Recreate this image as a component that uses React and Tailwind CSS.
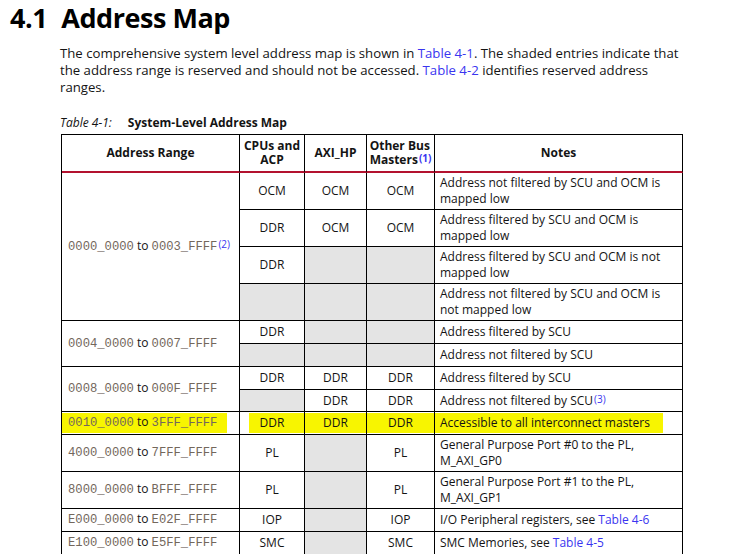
import React from "react";

const sans = "font-['Open_Sans','Noto_Sans',sans-serif]";
const mono = "font-['Liberation_Mono',monospace] text-[12.2px] text-[#73675c]";
const link = "text-[#3a35f0]";

const Sup = ({ n }) => (
    <sup className={`${link} text-[10px] relative -top-[2px] ml-[1px]`}>({n})</sup>
);

const Addr = ({ from, to, sup }) => (
    <span>
        <span className={mono}>{from}</span> to <span className={mono}>{to}</span>
        {sup && <Sup n={sup} />}
    </span>
);

const Cell = ({ children, gray, className = "" }) => (
    <div className={`border-r border-b border-black flex items-center justify-center ${gray ? "bg-[#e4e4e4]" : ""} ${className}`}>
        {children}
    </div>
);

const AddrCell = ({ children, className = "" }) => (
    <div className={`border-r border-b border-black flex items-center pl-[6px] ${className}`}>{children}</div>
);

const Note = ({ children }) => (
    <div className="border-r border-b border-black flex items-center pl-[5px] pr-[4px] leading-[16px]">
        <div>{children}</div>
    </div>
);

const Head = ({ children }) => (
    <div className="border-r border-b-2 border-b-[#b3122f] border-r-black flex items-center justify-center text-center font-bold leading-[14px]">
        {children}
    </div>
);

export default function App() {
    return (
        <div className={`${sans} bg-white text-[#141414] w-[730px] h-[554px] overflow-hidden`}>
            <h1 className="pl-[10px] pt-[1px] text-[27px] font-bold leading-[33px] text-black tracking-[-0.45px]">
                4.1<span className="ml-[14px]">Address Map</span>
            </h1>

            <div className="pl-[60px] mt-[11px] text-[13.2px] leading-[17px]">
                <div>The comprehensive system level address map is shown in <span className={link}>Table 4-1</span>. The shaded entries indicate that</div>
                <div>the address range is reserved and should not be accessed. <span className={link}>Table 4-2</span> identifies reserved address</div>
                <div>ranges.</div>
            </div>

            <div className="pl-[60px] mt-[19px] text-[12px] leading-[16px]">
                <span className="italic">Table 4-1:</span>
                <span className="font-bold ml-[16px]">System-Level Address Map</span>
            </div>

            <div className="ml-[61px] mt-[3px] w-[622px] border-l border-t border-black grid grid-cols-[178px_65px_62px_68px_248px] grid-rows-[38px_37px_37px_37px_37px_23px_23px_23px_22px_23px_37px_37px_23px_23px] text-[12px]">
                <Head>Address Range</Head>
                <Head>CPUs and<br />ACP</Head>
                <Head>AXI_HP</Head>
                <Head><span className="text-left">Other Bus<br />Masters<Sup n="1" /></span></Head>
                <Head>Notes</Head>

                <AddrCell className="row-span-4"><Addr from="0000_0000" to="0003_FFFF" sup="2" /></AddrCell>
                <Cell>OCM</Cell>
                <Cell>OCM</Cell>
                <Cell>OCM</Cell>
                <Note>Address not filtered by SCU and OCM is<br />mapped low</Note>

                <Cell>DDR</Cell>
                <Cell>OCM</Cell>
                <Cell>OCM</Cell>
                <Note>Address filtered by SCU and OCM is<br />mapped low</Note>

                <Cell>DDR</Cell>
                <Cell gray />
                <Cell gray />
                <Note>Address filtered by SCU and OCM is not<br />mapped low</Note>

                <Cell gray />
                <Cell gray />
                <Cell gray />
                <Note>Address not filtered by SCU and OCM is<br />not mapped low</Note>

                <AddrCell className="row-span-2"><Addr from="0004_0000" to="0007_FFFF" /></AddrCell>
                <Cell>DDR</Cell>
                <Cell gray />
                <Cell gray />
                <Note>Address filtered by SCU</Note>

                <Cell gray />
                <Cell gray />
                <Cell gray />
                <Note>Address not filtered by SCU</Note>

                <AddrCell className="row-span-2"><Addr from="0008_0000" to="000F_FFFF" /></AddrCell>
                <Cell>DDR</Cell>
                <Cell>DDR</Cell>
                <Cell>DDR</Cell>
                <Note>Address filtered by SCU</Note>

                <Cell gray />
                <Cell>DDR</Cell>
                <Cell>DDR</Cell>
                <Note>Address not filtered by SCU<Sup n="3" /></Note>

                <div className="border-r border-b border-black flex items-stretch py-[1px] pr-[12px]">
                    <div className="bg-[#f8f500] flex items-center pl-[6px] pr-[4px] w-full">
                        <Addr from="0010_0000" to="3FFF_FFFF" />
                    </div>
                </div>
                <div className="border-r border-b border-black flex items-stretch py-[1px] pl-[9px]">
                    <div className="bg-[#f8f500] flex items-center justify-center w-full pr-[9px]">DDR</div>
                </div>
                <div className="border-r border-b border-black flex items-stretch py-[1px]">
                    <div className="bg-[#f8f500] flex items-center justify-center w-full">DDR</div>
                </div>
                <div className="border-r border-b border-black flex items-stretch py-[1px]">
                    <div className="bg-[#f8f500] flex items-center justify-center w-full">DDR</div>
                </div>
                <div className="border-r border-b border-black flex items-stretch py-[1px] pr-[19px]">
                    <div className="bg-[#f8f500] flex items-center pl-[5px] w-full">Accessible to all interconnect masters</div>
                </div>

                <AddrCell><Addr from="4000_0000" to="7FFF_FFFF" /></AddrCell>
                <Cell>PL</Cell>
                <Cell gray />
                <Cell>PL</Cell>
                <Note>General Purpose Port #0 to the PL,<br />M_AXI_GP0</Note>

                <AddrCell><Addr from="8000_0000" to="BFFF_FFFF" /></AddrCell>
                <Cell>PL</Cell>
                <Cell gray />
                <Cell>PL</Cell>
                <Note>General Purpose Port #1 to the PL,<br />M_AXI_GP1</Note>

                <AddrCell><Addr from="E000_0000" to="E02F_FFFF" /></AddrCell>
                <Cell>IOP</Cell>
                <Cell gray />
                <Cell>IOP</Cell>
                <Note>I/O Peripheral registers, see <span className={link}>Table 4-6</span></Note>

                <AddrCell><Addr from="E100_0000" to="E5FF_FFFF" /></AddrCell>
                <Cell>SMC</Cell>
                <Cell gray />
                <Cell>SMC</Cell>
                <Note>SMC Memories, see <span className={link}>Table 4-5</span></Note>
            </div>
        </div>
    );
}
